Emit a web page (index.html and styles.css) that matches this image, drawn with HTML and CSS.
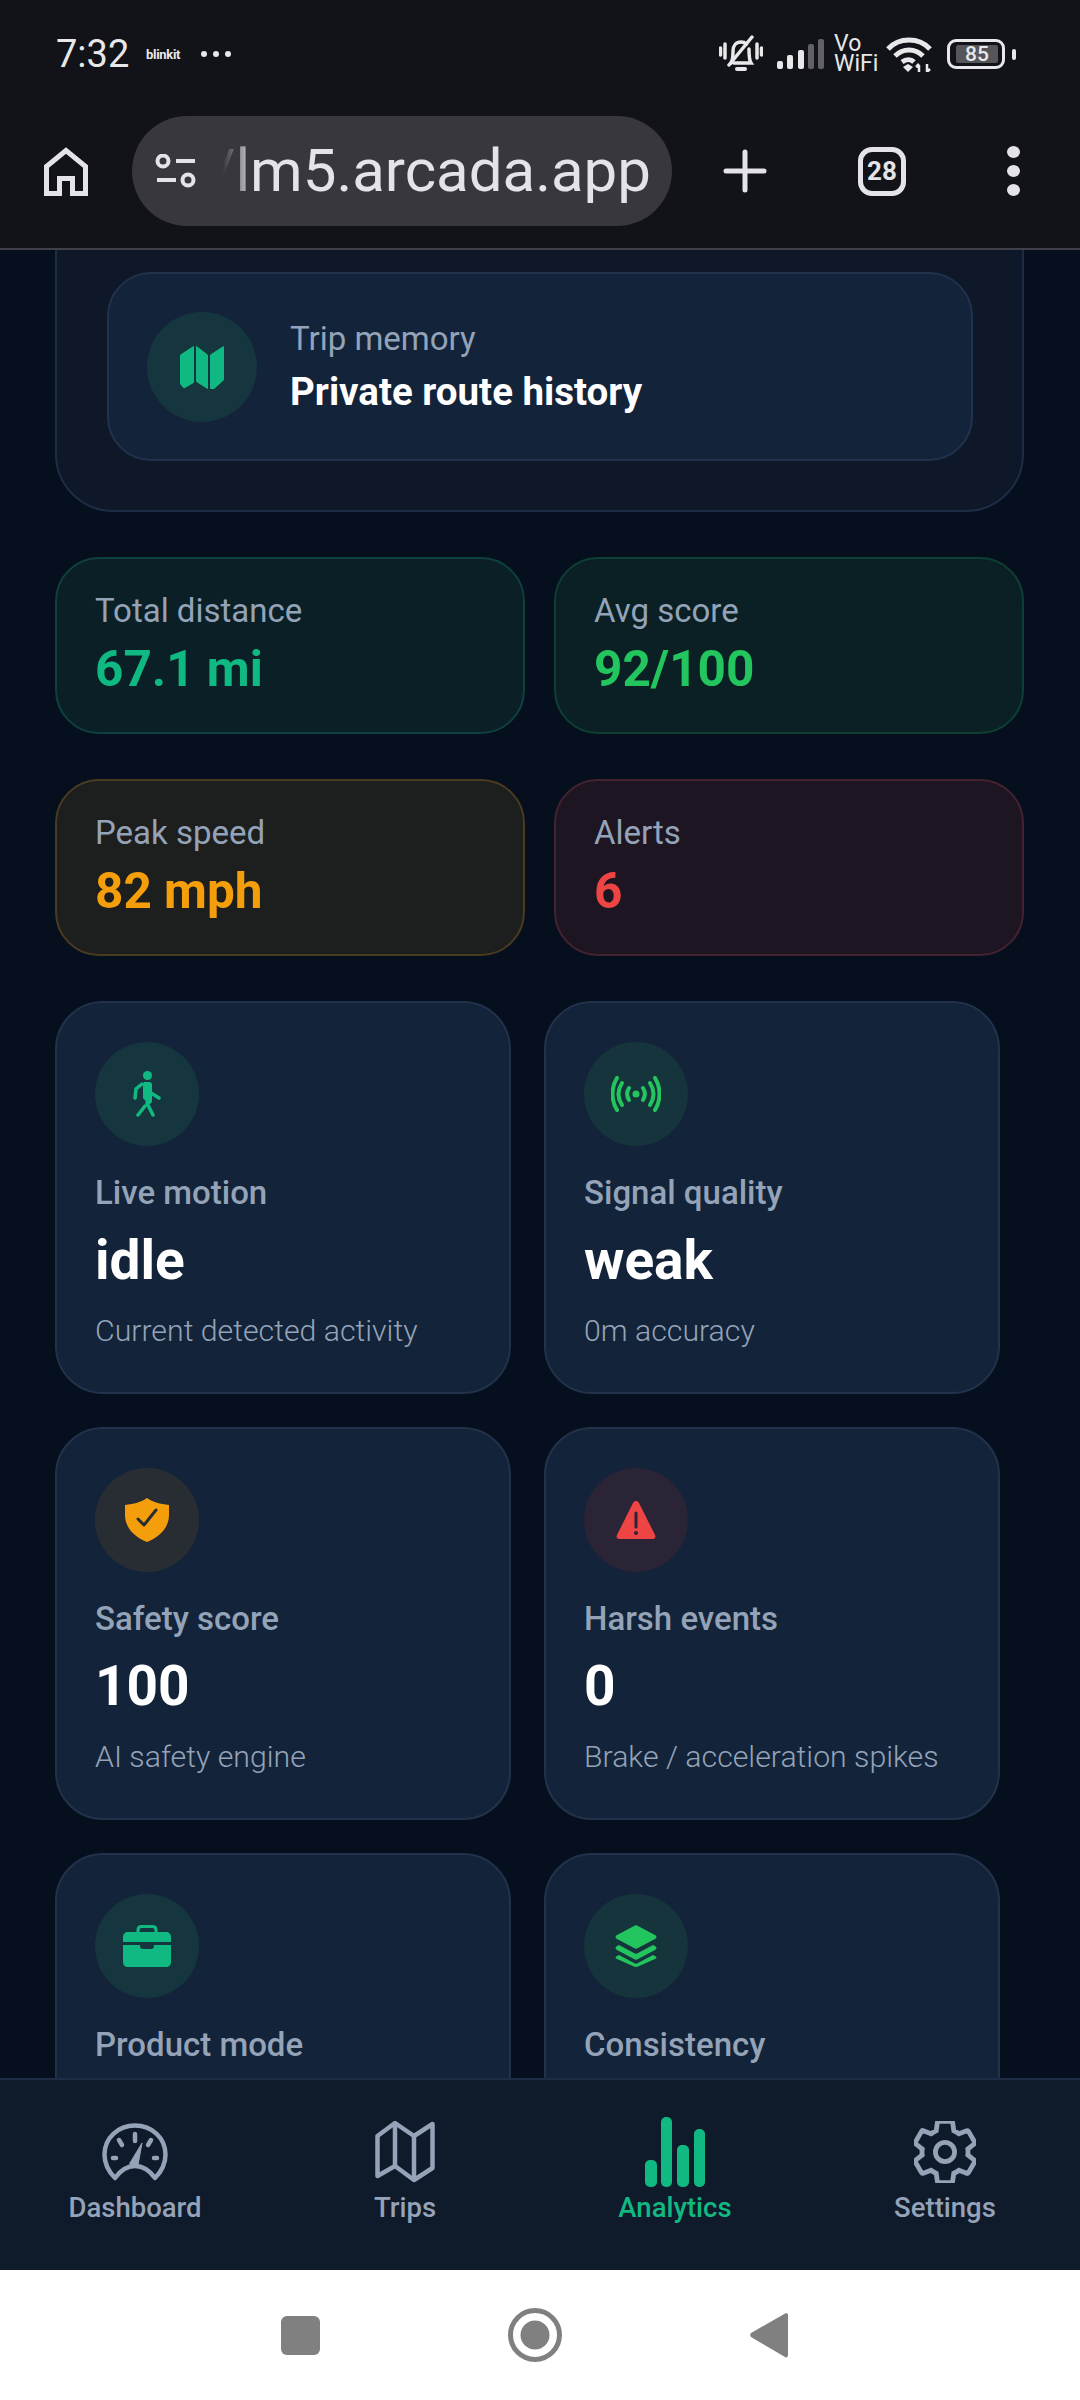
FILE: index.html
```html
<!DOCTYPE html>
<html lang="en">
<head>
    <meta charset="UTF-8">
    <meta name="viewport" content="width=device-width, initial-scale=1.0">
    <title>Analytics</title>
    <link rel="stylesheet" href="styles.css">
</head>
<body>
    <header class="chrome">
        <div class="status-bar">
            <div class="status-left">
                <span class="time">7:32</span>
                <span class="notif">blinkit</span>
                <span class="more-dots"><i></i><i></i><i></i></span>
            </div>
            <div class="status-right">
                <svg class="bell" width="44" height="38" viewBox="0 0 44 38" fill="none" stroke="#e8e8ea" stroke-width="3.500" stroke-linecap="round">
                    <path d="M1.500 13v7M6 9v14M38 9v14M42.500 13v7" />
                    <path d="M12 28c2-3 2-6 2-12 0-5 3-9 8-9 2 0 4 .6 5.500 2M30 14c0 7 0 11 2 14H15" />
                    <path d="M10 30 33 2" />
                    <path d="M18 34h8" stroke-width="4" />
                </svg>
                <svg class="bars" width="48" height="32" viewBox="0 0 48 32">
                    <rect x="0" y="23" width="6" height="8" rx="2" fill="#e8e8ea" />
                    <rect x="10" y="17" width="6" height="14" rx="2" fill="#e8e8ea" />
                    <rect x="21" y="12" width="6" height="19" rx="2" fill="#e8e8ea" />
                    <rect x="31" y="6" width="6" height="25" rx="2" fill="#626266" />
                    <rect x="41" y="1" width="6" height="30" rx="2" fill="#626266" />
                </svg>
                <span class="vowifi">Vo<br>WiFi</span>
                <svg class="wifi" width="46" height="36" viewBox="0 0 46 36" fill="none" stroke="#e8e8ea" stroke-width="5">
                    <path d="M2 13C13 1 33 1 44 13" />
                    <path d="M9 20c8-8 20-8 28 0" />
                    <path d="M16 26c4-3 9-3 12 0" />
                    <path d="M22 36l-5-5 5-3 5 3z" fill="#e8e8ea" stroke="none" />
                    <path d="M33 36v-7M33 28l-3 3M41 36v-8M41 36l3-3" stroke-width="2.500" />
                </svg>
                <div class="battery">
                    <div class="battery-box"><span class="battery-fill">85</span></div>
                    <i class="battery-nub"></i>
                </div>
            </div>
        </div>
        <div class="toolbar">
            <svg class="home" width="44" height="49" viewBox="0 0 44 49" fill="none" stroke="#e3e3e8" stroke-width="5">
                <path d="M2.500 19.500 22 3.500l19.500 16v27h-13v-15h-13v15h-13z" />
            </svg>
            <div class="url-pill">
                <svg width="42" height="34" viewBox="0 0 42 34" fill="none" stroke="#e3e3e8" stroke-width="4">
                    <circle cx="8" cy="7" r="5.500" />
                    <path d="M21 7h19M2 26h19" />
                    <circle cx="33" cy="26" r="5.500" />
                </svg>
                <div class="url-text"><span>/lm5.arcada.app</span></div>
            </div>
            <svg class="plus" width="44" height="44" viewBox="0 0 44 44" stroke="#e3e3e8" stroke-width="5" stroke-linecap="round">
                <path d="M22 3v38M3 22h38" />
            </svg>
            <div class="tabs">28</div>
            <div class="menu-dots"><i></i><i></i><i></i></div>
        </div>
    </header>

    <main class="scroller">
        <section class="hero">
            <div class="memory">
                <div class="icon-circle hero-icon tint-emerald">
                    <svg width="44" height="44" viewBox="0 0 44 44" fill="#10b981" stroke="#10b981" stroke-width="1" stroke-linejoin="round">
                        <path d="M.5 10 13.500 1.500v36L4 43 .5 39z" />
                        <path d="M16.500 1.500 27.500 10v33.500l-11-7z" />
                        <path d="M30.500 10 43.500 1.500V35L34 43.500h-3.500z" />
                    </svg>
                </div>
                <div class="memory-text">
                    <div class="memory-label">Trip memory</div>
                    <div class="memory-value">Private route history</div>
                </div>
            </div>
        </section>

        <section class="stats">
            <div class="stat stat-emerald">
                <div class="stat-label">Total distance</div>
                <div class="stat-value">67.1 mi</div>
            </div>
            <div class="stat stat-green">
                <div class="stat-label">Avg score</div>
                <div class="stat-value">92/100</div>
            </div>
            <div class="stat stat-amber">
                <div class="stat-label">Peak speed</div>
                <div class="stat-value">82 mph</div>
            </div>
            <div class="stat stat-red">
                <div class="stat-label">Alerts</div>
                <div class="stat-value">6</div>
            </div>
        </section>

        <section class="cards">
            <article class="card">
                <div class="icon-circle tint-emerald">
                    <svg width="28" height="46" viewBox="0 0 28 46" fill="none" stroke="#10b981" stroke-width="3.500" stroke-linecap="round">
                        <circle cx="14.500" cy="4.500" r="4.500" fill="#10b981" stroke="none" />
                        <path d="M11 11h5c2 0 3 1 3 3v17l-2 2h-2l-5-6V13z" fill="#10b981" stroke="none" />
                        <path d="M9 13l-6 5-1 9" />
                        <path d="M18 22l8 5" />
                        <path d="M14 32l6 12M12 35 5 44" />
                    </svg>
                </div>
                <div class="card-label">Live motion</div>
                <div class="card-value">idle</div>
                <div class="card-sub">Current detected activity</div>
            </article>
            <article class="card">
                <div class="icon-circle tint-green">
                    <svg width="50" height="36" viewBox="0 0 50 36" fill="none" stroke="#22c55e" stroke-width="4" stroke-linecap="round">
                        <circle cx="25" cy="18" r="3.500" fill="#22c55e" stroke="none" />
                        <path d="M18 12c-2.500 4-2.500 8 0 12M32 12c2.500 4 2.500 8 0 12" />
                        <path d="M11 7c-4.500 7-4.500 15 0 22M39 7c4.500 7 4.500 15 0 22" />
                        <path d="M6 2c-6 10-6 22 0 32M44 2c6 10 6 22 0 32" />
                    </svg>
                </div>
                <div class="card-label">Signal quality</div>
                <div class="card-value">weak</div>
                <div class="card-sub">0m accuracy</div>
            </article>
            <article class="card">
                <div class="icon-circle tint-amber">
                    <svg width="44" height="44" viewBox="0 0 44 44">
                        <path d="M22 0c6 4 13 6 22 7v10c0 12-9 22-22 27C9 39 0 29 0 17V7c9-1 16-3 22-7z" fill="#f59e0b" />
                        <path d="M13 21l6 6 12-15" fill="none" stroke="#282d33" stroke-width="3" stroke-linecap="round" stroke-linejoin="round" />
                    </svg>
                </div>
                <div class="card-label">Safety score</div>
                <div class="card-value">100</div>
                <div class="card-sub">AI safety engine</div>
            </article>
            <article class="card">
                <div class="icon-circle tint-red">
                    <svg width="40" height="38" viewBox="0 0 40 38">
                        <path d="M20 0c1 0 2 .500 3 2l16 32c1 2 0 4-2 4H3c-2 0-3-2-2-4L17 2c1-1.500 2-2 3-2z" fill="#ef4444" />
                        <path d="M20 12v14" stroke="#2a2436" stroke-width="3" stroke-linecap="round" />
                        <circle cx="20" cy="32" r="2" fill="#2a2436" />
                    </svg>
                </div>
                <div class="card-label">Harsh events</div>
                <div class="card-value">0</div>
                <div class="card-sub">Brake / acceleration spikes</div>
            </article>
            <article class="card">
                <div class="icon-circle tint-emerald">
                    <svg width="48" height="42" viewBox="0 0 48 42" fill="#10b981">
                        <path d="M15 7V5c0-2.500 1.500-3.500 3.500-3.500h11c2 0 3.500 1 3.500 3.500v2" fill="none" stroke="#10b981" stroke-width="3" />
                        <path d="M5 7h38c3 0 5 2 5 5v5H0v-5c0-3 2-5 5-5z" />
                        <path d="M0 20h17v1c0 2 1 3 3 3h8c2 0 3-1 3-3v-1h17v17c0 3-2 5-5 5H5c-3 0-5-2-5-5z" />
                    </svg>
                </div>
                <div class="card-label">Product mode</div>
            </article>
            <article class="card">
                <div class="icon-circle tint-green">
                    <svg width="42" height="42" viewBox="0 0 42 42" fill="#22c55e">
                        <path d="M19 1c1.500-1 2.500-1 4 0l17 9c2 1 2 3 0 4l-17 9c-1.500 1-2.500 1-4 0L2 14c-2-1-2-3 0-4z" />
                        <path d="M4 20l15 8c1.500 1 2.500 1 4 0l15-8 2 1c2 1 2 3 0 4l-17 9c-1.500 1-2.500 1-4 0L2 25c-2-1-2-3 0-4z" />
                        <path d="M4 30l15 8c1.500 1 2.500 1 4 0l15-8 2 1c2 1 2 2 0 3l-17 7.500c-1.500 .700-2.500 .700-4 0L2 34c-2-1-2-2 0-3z" />
                    </svg>
                </div>
                <div class="card-label">Consistency</div>
            </article>
        </section>
    </main>

    <nav class="bottom-nav">
        <div class="nav-item">
            <div class="nav-icon">
                <svg width="66" height="58" viewBox="0 0 66 58" fill="none" stroke="#94a3b8" stroke-width="4.500" stroke-linecap="round" stroke-linejoin="round">
                    <path d="M13 55C6 48 2.500 40 2.500 31.500 2.500 15 16 2.500 33 2.500s30.500 12.500 30.500 29c0 8.500-3.500 16.500-10.500 23.500-5-7-12-12-20-12s-15 5-20 12z" />
                    <path d="M33 11v7M17 17l3 5M49 17l-3 5M11 35h3M52 35h3" />
                    <path d="M28 40l12-20-4 22c-1 3-9 1-8-2z" fill="#94a3b8" stroke-width="1" />
                </svg>
            </div>
            <span>Dashboard</span>
        </div>
        <div class="nav-item">
            <div class="nav-icon">
                <svg width="60" height="62" viewBox="0 0 60 62" fill="none" stroke="#94a3b8" stroke-width="4.500" stroke-linejoin="round">
                    <path d="M2.500 15 20 2l19 13L57.500 3v44L39 59 20 45 2.500 55z" />
                    <path d="M20 2v43M39 15v44" />
                </svg>
            </div>
            <span>Trips</span>
        </div>
        <div class="nav-item nav-active">
            <div class="nav-icon">
                <svg width="60" height="70" viewBox="0 0 60 70" fill="#10b981">
                    <rect x="0" y="43" width="12" height="27" rx="5" />
                    <rect x="16" y="0" width="11" height="70" rx="5" />
                    <rect x="32" y="28" width="12" height="42" rx="5" />
                    <rect x="49" y="12" width="11" height="58" rx="5" />
                </svg>
            </div>
            <span>Analytics</span>
        </div>
        <div class="nav-item">
            <div class="nav-icon">
                <svg width="62" height="62" viewBox="2.300 2.300 19.400 19.400" fill="none" stroke="#94a3b8" stroke-width="1.500">
                    <path d="M19.140 12.940c.04-.3.06-.61.06-.94 0-.32-.02-.64-.07-.94l2.030-1.580c.18-.14.23-.41.12-.61l-1.920-3.320c-.12-.22-.37-.29-.59-.22l-2.390.96c-.5-.38-1.030-.7-1.620-.94l-.36-2.540c-.04-.24-.24-.41-.48-.41h-3.840c-.24 0-.43.17-.47.41l-.36 2.540c-.59.24-1.130.57-1.620.94l-2.390-.96c-.22-.08-.47 0-.59.22L2.740 8.870c-.12.21-.08.47.12.61l2.030 1.580c-.05.3-.09.63-.09.94s.02.64.07.94l-2.030 1.580c-.18.14-.23.41-.12.61l1.920 3.320c.12.22.37.29.59.22l2.390-.96c.5.38 1.030.7 1.620.94l.36 2.540c.05.24.24.41.48.41h3.840c.24 0 .44-.17.47-.41l.36-2.540c.59-.24 1.130-.56 1.620-.94l2.390.96c.22.08.47 0 .59-.22l1.920-3.320c.12-.22.07-.47-.12-.61l-2.010-1.580z" />
                    <circle cx="12" cy="12" r="3" />
                </svg>
            </div>
            <span>Settings</span>
        </div>
    </nav>

    <footer class="system-nav">
        <i class="sys-square"></i>
        <svg width="54" height="54" viewBox="0 0 54 54">
            <circle cx="27" cy="27" r="24.500" fill="none" stroke="#808080" stroke-width="5" />
            <circle cx="27" cy="27" r="14.500" fill="#808080" />
        </svg>
        <svg width="38" height="46" viewBox="0 0 38 46">
            <path d="M36 1c1 0 2 1 2 2v40c0 2-2 3-3 2L1 25c-1-1-1-3 0-4z" fill="#808080" />
        </svg>
    </footer>
</body>
</html>
```

FILE: styles.css
```css
* {
    box-sizing: border-box;
}

html, body {
    margin: 0;
    padding: 0;
}

body {
    width: 1080px;
    height: 2400px;
    display: flex;
    flex-direction: column;
    overflow: hidden;
    font-family: Roboto, 'Noto Sans', sans-serif;
    background-color: #060f1e;
    color: #fff;
}

svg {
    display: block;
    flex-shrink: 0;
}

/* browser chrome */
.chrome {
    height: 250px;
    flex-shrink: 0;
    background-color: #111318;
    border-bottom: 2px solid #3f4049;
}

.status-bar {
    height: 108px;
    padding: 0 64px 0 56px;
    display: flex;
    justify-content: space-between;
    align-items: center;
    color: #e8e8ea;
}

.status-left,
.status-right {
    display: flex;
    align-items: center;
}

.time {
    font-size: 38px;
    width: 90px;
}

.notif {
    font-size: 13px;
    font-weight: 700;
    width: 55px;
    letter-spacing: -0.3px;
}

.more-dots {
    display: flex;
    gap: 6px;
}

.more-dots i {
    width: 6px;
    height: 6px;
    border-radius: 50%;
    background-color: #e8e8ea;
}

.bell {
    margin-right: 14px;
}

.bars {
    margin-right: 9px;
}

.vowifi {
    font-size: 23px;
    line-height: 20px;
    width: 52px;
}

.battery {
    display: flex;
    align-items: center;
    gap: 7px;
    margin-left: 15px;
}

.battery-box {
    width: 58px;
    height: 30px;
    border: 3px solid #e8e8ea;
    border-radius: 9px;
    padding: 3px;
}

.battery-fill {
    display: block;
    width: 42px;
    height: 18px;
    background-color: #55555a;
    border-radius: 2px;
    font-size: 21px;
    line-height: 18px;
    text-align: center;
    font-weight: 500;
    margin-left: 3px;
}

.battery-nub {
    width: 4px;
    height: 11px;
    border-radius: 2px;
    background-color: #e8e8ea;
}

.toolbar {
    height: 126px;
    padding-left: 44px;
    display: flex;
    align-items: center;
}

.url-pill {
    width: 540px;
    height: 110px;
    margin-left: 44px;
    padding: 0 21px 0 23px;
    border-radius: 55px;
    background-color: #37373d;
    display: flex;
    align-items: center;
}

.url-text {
    flex: 1;
    margin-left: 20px;
    overflow: hidden;
    display: flex;
    justify-content: flex-end;
    white-space: nowrap;
    font-size: 60px;
    line-height: 80px;
    color: #e3e3e8;
    -webkit-mask-image: linear-gradient(to right, transparent 6px, #000 38px);
    mask-image: linear-gradient(to right, transparent 6px, #000 38px);
}

.plus {
    margin-left: 51px;
}

.tabs {
    width: 48px;
    height: 49px;
    margin-left: 91px;
    border: 5px solid #e3e3e8;
    border-radius: 14px;
    font-size: 26px;
    font-weight: 700;
    line-height: 39px;
    text-align: center;
    color: #e3e3e8;
}

.menu-dots {
    margin-left: 101px;
    display: flex;
    flex-direction: column;
    gap: 7px;
}

.menu-dots i {
    width: 13px;
    height: 12px;
    border-radius: 50%;
    background-color: #e3e3e8;
}

/* scrolled page */
.scroller {
    flex: 1;
    min-height: 0;
    overflow: hidden;
    padding: 0 56px 0 55px;
}

.hero {
    margin-top: -60px;
    padding: 80px 49px 49px 50px;
    background-color: #0e1828;
    border: 2px solid #1e2d45;
    border-radius: 58px;
}

.memory {
    height: 189px;
    padding: 0 38px;
    display: flex;
    align-items: center;
    gap: 33px;
    background-color: #132339;
    border: 2px solid #22324d;
    border-radius: 44px;
}

.icon-circle {
    width: 104px;
    height: 104px;
    border-radius: 50%;
    display: flex;
    justify-content: center;
    align-items: center;
}

.hero-icon {
    width: 110px;
    height: 110px;
}

.tint-emerald {
    background-color: #15363f;
}

.tint-green {
    background-color: #16343b;
}

.tint-amber {
    background-color: #282d33;
}

.tint-red {
    background-color: #2a2436;
}

.memory-label {
    font-size: 33px;
    line-height: 40px;
    color: #94a3b8;
}

.memory-value {
    margin-top: 11px;
    font-size: 38.5px;
    line-height: 44px;
    font-weight: 700;
}

.stats {
    margin-top: 45px;
    display: grid;
    grid-template-columns: 1fr 1fr;
    column-gap: 29px;
    row-gap: 45px;
}

.stat {
    height: 177px;
    padding: 32px 38px 0;
    border: 2px solid;
    border-radius: 44px;
}

.stat-label {
    font-size: 33px;
    line-height: 40px;
    color: #94a3b8;
}

.stat-value {
    margin-top: 8px;
    font-size: 49.5px;
    line-height: 60px;
    font-weight: 700;
}

.stat-emerald {
    background-color: #0a2026;
    border-color: #0f4040;
}

.stat-emerald .stat-value {
    color: #10b981;
}

.stat-green {
    background-color: #0b2025;
    border-color: #0e3f33;
}

.stat-green .stat-value {
    color: #22c55e;
}

.stat-amber {
    background-color: #1d1f1f;
    border-color: #4a3b20;
}

.stat-amber .stat-value {
    color: #f59e0b;
}

.stat-red {
    background-color: #1d1622;
    border-color: #45222f;
}

.stat-red .stat-value {
    color: #ef4444;
}

.cards {
    margin-top: 45px;
    display: grid;
    grid-template-columns: 456px 456px;
    gap: 33px;
}

.card {
    height: 393px;
    padding: 39px 38px 0;
    background-color: #132339;
    border: 2px solid #22324a;
    border-radius: 48px;
}

.card-label {
    margin-top: 27px;
    font-size: 33px;
    line-height: 40px;
    font-weight: 500;
    color: #94a3b8;
}

.card-value {
    margin-top: 16px;
    font-size: 55px;
    line-height: 62px;
    font-weight: 700;
}

.card-sub {
    margin-top: 21px;
    font-size: 30.25px;
    line-height: 38px;
    font-weight: 300;
    color: #94a3b8;
}

/* bottom navigation */
.bottom-nav {
    height: 192px;
    flex-shrink: 0;
    display: grid;
    grid-template-columns: repeat(4, 270px);
    background-color: #0f1a2b;
    border-top: 2px solid #1e2d45;
}

.nav-item {
    display: flex;
    flex-direction: column;
    align-items: center;
    font-size: 27.5px;
    font-weight: 500;
    color: #94a3b8;
}

.nav-icon {
    height: 72px;
    margin-top: 36px;
    display: flex;
    align-items: center;
    justify-content: center;
}

.nav-item span {
    line-height: 36px;
    margin-top: 2px;
}

.nav-active {
    color: #10b981;
}

.system-nav {
    height: 130px;
    flex-shrink: 0;
    padding-right: 12px;
    background-color: #fff;
    display: flex;
    justify-content: center;
    align-items: center;
    gap: 188px;
}

.sys-square {
    width: 39px;
    height: 39px;
    border-radius: 6px;
    background-color: #808080;
}
```
